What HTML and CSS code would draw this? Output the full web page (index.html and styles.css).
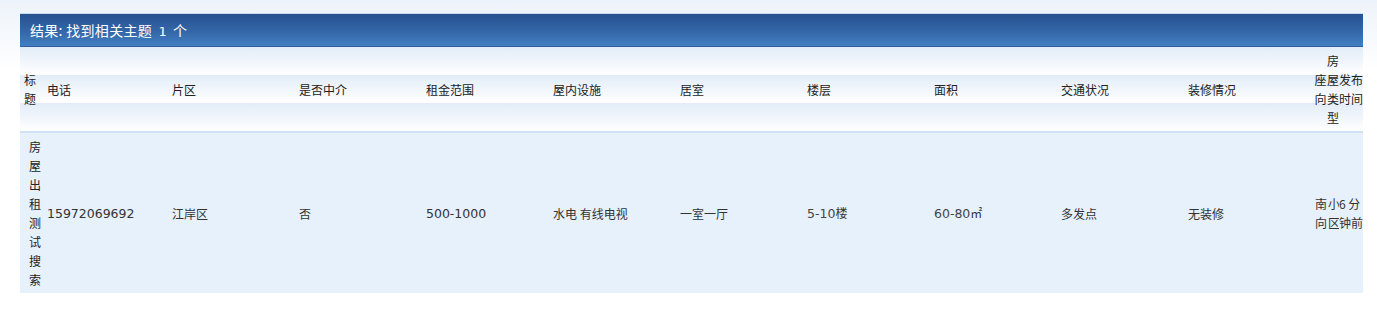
FILE: index.html
```html
<!DOCTYPE html>
<html lang="zh-CN">
<head>
<meta charset="utf-8">
<title>搜索结果</title>
<link rel="stylesheet" href="styles.css">
</head>
<body>
<div class="wrap">
  <div class="titlebar">结果: 找到相关主题 <span class="num">1</span> 个</div>
  <table class="result">
    <colgroup>
      <col class="c-title">
      <col class="c-tel">
      <col class="c-wide"><col class="c-wide"><col class="c-wide"><col class="c-wide">
      <col class="c-wide"><col class="c-wide"><col class="c-wide"><col class="c-wide">
      <col class="c-last">
      <col class="c-n1"><col class="c-n2"><col class="c-n3">
    </colgroup>
    <thead>
      <tr>
        <th class="first">标题</th>
        <th>电话</th>
        <th>片区</th>
        <th>是否中介</th>
        <th>租金范围</th>
        <th>屋内设施</th>
        <th>居室</th>
        <th>楼层</th>
        <th>面积</th>
        <th>交通状况</th>
        <th>装修情况</th>
        <th class="narrow">座向</th>
        <th class="narrow">房屋类型</th>
        <th class="narrow">发布时间</th>
      </tr>
    </thead>
    <tbody>
      <tr>
        <td class="first">房屋出租测试搜索</td>
        <td class="latin">15972069692</td>
        <td>江岸区</td>
        <td>否</td>
        <td class="latin">500-1000</td>
        <td>水电 有线电视</td>
        <td>一室一厅</td>
        <td><span class="latin">5-10</span>楼</td>
        <td><span class="latin">60-80</span>㎡</td>
        <td>多发点</td>
        <td>无装修</td>
        <td class="narrow">南向</td>
        <td class="narrow">小区</td>
        <td class="narrow tight">6 分钟前</td>
      </tr>
    </tbody>
  </table>
</div>
</body>
</html>
```

FILE: styles.css
```css
html, body {
  margin: 0;
  padding: 0;
}

body {
  background: linear-gradient(to bottom, #edf3fa 0px, #ffffff 70px) no-repeat #ffffff;
  font-family: "Noto Sans CJK SC", "DejaVu Sans", sans-serif;
  font-size: 12px;
  color: #333333;
  min-height: 326px;
}

.wrap {
  width: 1343px;
  margin: 0 0 0 20px;
  padding-top: 13px;
}

.titlebar {
  height: 32px;
  line-height: 32px;
  border-top: 1px solid #c9dbee;
  border-bottom: 1px solid #2f609c;
  background: linear-gradient(to bottom, #28518f 0%, #3467a8 55%, #4180c3 100%);
  color: #ffffff;
  font-size: 14px;
  padding-left: 10px;
  letter-spacing: 0.3px;
}

.titlebar .num {
  font-family: "DejaVu Sans Mono", monospace;
  font-size: 13px;
  padding: 0 3px;
}

.result {
  width: 1343px;
  border-collapse: collapse;
  table-layout: fixed;
}

.c-title { width: 24px; }
.c-tel { width: 125px; }
.c-wide { width: 127px; }
.c-last { width: 129px; }
.c-n1 { width: 13px; }
.c-n2 { width: 12px; }
.c-n3 { width: 24px; }

.result th,
.result td {
  padding: 4px 0 4px 3px;
  line-height: 19px;
  text-align: left;
  vertical-align: middle;
  font-weight: normal;
  color: #333333;
  overflow: hidden;
}

.result thead tr {
  background: repeating-linear-gradient(to bottom, #e2ecf8 0px, #ffffff 28px);
}

.result th {
  border-bottom: 2px solid #d2e2f2;
  color: #222222;
}

.result tbody tr {
  background: #e6f1fc;
}

.result td {
  height: 152px;
}

.result .first {
  padding-left: 4px;
}

.result td.first {
  padding-left: 9px;
  color: #222222;
}

.result .narrow {
  padding-left: 1px;
  padding-right: 0;
}

.result .narrow.tight {
  padding-left: 0;
}

.result th.narrow {
  text-align: center;
  padding-left: 0;
}

.latin {
  font-family: "DejaVu Sans", Verdana, sans-serif;
  font-size: 12.5px;
  color: #444444;
}
```
